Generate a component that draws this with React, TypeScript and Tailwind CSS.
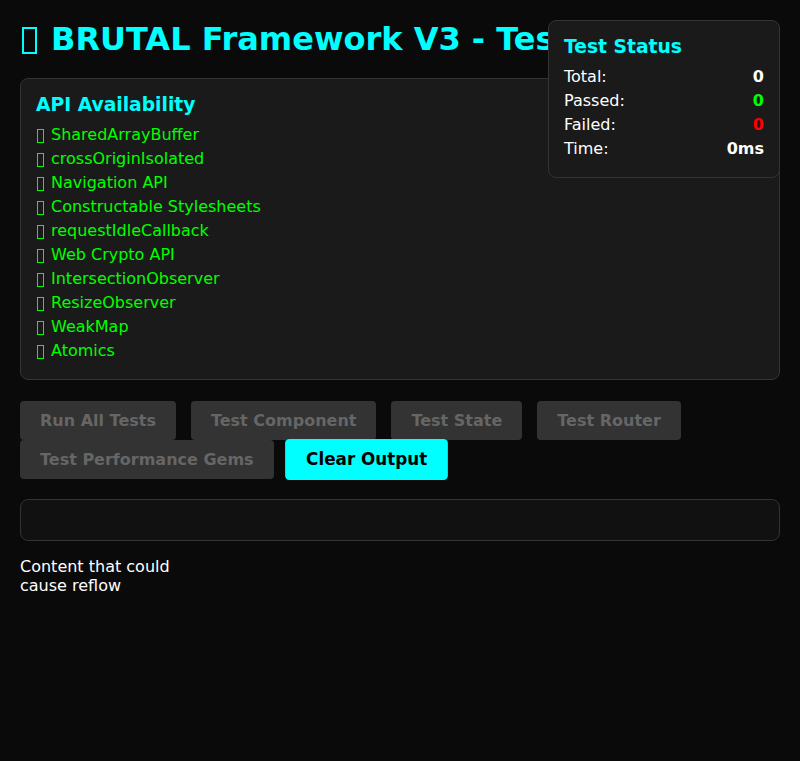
import React from "react";

const apis = [
  "SharedArrayBuffer",
  "crossOriginIsolated",
  "Navigation API",
  "Constructable Stylesheets",
  "requestIdleCallback",
  "Web Crypto API",
  "IntersectionObserver",
  "ResizeObserver",
  "WeakMap",
  "Atomics",
];

export default function App() {
  return (
    <div
      className="min-h-[761px] bg-[#0a0a0a] p-5 text-[#e0e0e0]"
      style={{ fontFamily: '"DejaVu Sans", sans-serif' }}
    >
      <h1 className="flex items-center text-[32px] font-bold leading-[38px] text-[#00ffff] whitespace-nowrap">
        <span className="ml-[2px] mt-[3px] inline-block h-[27px] w-[15px] shrink-0 border-2 border-[#00ffff]" />
        <span className="ml-[14px]">BRUTAL Framework V3 - Test Suite</span>
      </h1>

      <div className="mt-[20px] rounded-lg border border-[#333] bg-[#1a1a1a] px-[15px] pt-[13px] pb-[16px]">
        <h3 className="mb-[5px] text-[18.72px] font-bold leading-[26px] text-[#00ffff]">
          API Availability
        </h3>
        <div className="flex flex-col">
          {apis.map((a) => (
            <div key={a} className="flex items-center text-[16px] leading-[24px] text-[#00ff00]">
              <span className="ml-px mt-[2px] inline-block h-[14px] w-[7px] shrink-0 border border-[#00ff00]" />
              <span className="ml-[7px]">{a}</span>
            </div>
          ))}
        </div>
      </div>

      <div className="mt-[21px] flex flex-wrap gap-x-[15px] gap-y-0">
        {["Run All Tests", "Test Component", "Test State", "Test Router", "Test Performance Gems"].map(
          (b) => (
            <button
              key={b}
              className="h-[39px] rounded bg-[#333] px-5 text-[16px] font-bold text-[#666]"
            >
              {b}
            </button>
          )
        )}
        <button className="h-[39px] scale-[1.05] rounded bg-[#00ffff] px-5 text-[16px] font-bold text-black">
          Clear Output
        </button>
      </div>

      <div className="mt-[20px] h-[42px] rounded-lg border border-[#333] bg-[#111]" />

      <div className="mt-[16px] w-[180px] text-[16px] leading-[19px] text-white">
        Content that could cause reflow
      </div>

      <div className="fixed right-5 top-5 w-[232px] rounded-lg border border-[#333] bg-[#1a1a1a] px-[15px] pt-[13px] pb-[16px]">
        <h3 className="mb-[5px] text-[18.72px] font-bold leading-[26px] text-[#00ffff]">Test Status</h3>
        {[
          ["Total:", "0", "text-white"],
          ["Passed:", "0", "text-[#00ff00]"],
          ["Failed:", "0", "text-[#ff0000]"],
          ["Time:", "0ms", "text-white"],
        ].map(([l, v, c]) => (
          <div key={l} className="flex justify-between text-[16px] leading-[24px]">
            <span className="text-white">{l}</span>
            <span className={`font-bold ${c}`}>{v}</span>
          </div>
        ))}
      </div>
    </div>
  );
}
